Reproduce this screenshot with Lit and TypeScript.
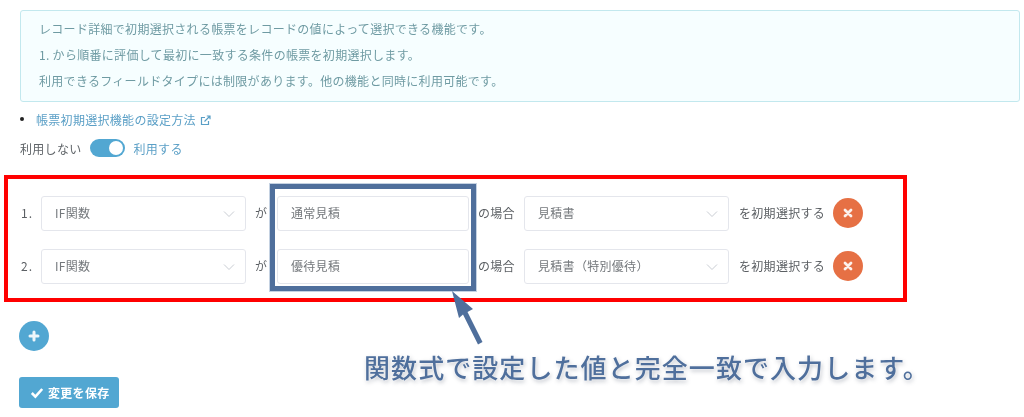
import { LitElement, html, css, svg } from "lit";
import { customElement } from "lit/decorators.js";

const chevron = html`<svg class="chev" width="12" height="8" viewBox="0 0 12 8"><path d="M1 1.500l5 5 5-5" fill="none" stroke="#c9cdd3" stroke-width="1"/></svg>`;
const cross = html`<svg width="12" height="12" viewBox="0 0 12 12"><path d="M3 3l6 6M9 3l-6 6" stroke="#fff" stroke-width="2.800" stroke-linecap="round" opacity=".9"/></svg>`;

@customElement("app-root")
export class AppRoot extends LitElement {
  static styles = css`
    :host {
      display: block;
      position: relative;
      width: 1024px;
      height: 417px;
      overflow: hidden;
      background: #fff;
      font-family: "Noto Sans CJK JP", "Noto Sans", sans-serif;
      font-size: 12px;
      letter-spacing: .3px;
      color: #5f6468;
    }
    .all { filter: blur(.3px); height: 417px; }
    .page { padding: 10px 4px 0 20px; display: flex; flex-direction: column; }
    .info {
      width: 1000px; height: 92px; box-sizing: border-box;
      padding: 5px 18px; background: #f6feff;
      border: 1px solid #c2e8ee; border-radius: 3px;
      color: #6f9ba3; line-height: 26px;
    }
    .link-row { display: flex; align-items: center; height: 18px; margin-top: 8px; color: #5a9fc6; }
    .dot { width: 4px; height: 4px; border-radius: 50%; background: #222; margin-right: 12px; }
    .link-row svg { margin-left: 4px; margin-top: 2px; }
    .toggle-row { display: flex; align-items: center; height: 20px; margin-top: 10px; }
    .toggle { width: 35px; height: 18px; border-radius: 9px; background: #52a7d2; margin: 0 9px 0 8px; display: flex; justify-content: flex-end; align-items: center; padding-right: 2px; box-sizing: border-box; }
    .knob { width: 14px; height: 14px; border-radius: 50%; background: #fff; }
    .on { color: #5a9fc6; }
    .rows { display: flex; flex-direction: column; gap: 18px; margin-top: 38px; }
    .row { display: flex; align-items: center; height: 35px; color: #5b5f63; }
    .label { padding-bottom: 3px; }
    .num { width: 20px; padding: 0 0 3px 1px; letter-spacing: 1.2px; }
    .field {
      height: 35px; box-sizing: border-box; border: 1px solid #e4e6ec; border-radius: 3px;
      background: #fff; display: flex; align-items: center; justify-content: space-between;
      padding: 0 10px 0 13px; color: #74787c;
    }
    .field span { padding-bottom: 3px; }
    .sel { width: 205px; }
    .inp { width: 192px; }
    .ga { width: 31px; padding-left: 9px; box-sizing: border-box; }
    .case { width: 55px; padding-left: 9px; box-sizing: border-box; }
    .tail { width: 94px; padding-left: 10px; box-sizing: content-box; white-space: nowrap; }
    .del { width: 30px; height: 30px; border-radius: 50%; background: #e67044; display: flex; align-items: center; justify-content: center; margin-bottom: 1px; }
    .add { width: 30px; height: 30px; border-radius: 50%; background: #52a7d2; display: flex; align-items: center; justify-content: center; margin: 37px 0 0 -1px; }
    .save { width: 100px; height: 31px; border-radius: 3px; background: #52a7d2; color: #fff; font-weight: 700; display: flex; align-items: center; justify-content: flex-start; gap: 4px; padding-left: 11px; box-sizing: border-box; margin: 26px 0 0 -1px; }
    .frame { position: absolute; box-sizing: border-box; }
    .red { left: 4px; top: 175px; width: 903px; height: 127px; border: 4px solid #ff0000; }
    .blue { left: 270px; top: 184px; width: 206px; height: 107px; border: 5px solid #4f6f9c; outline: 1px solid #c5d2e2; }
    .arrow { position: absolute; left: 440px; top: 285px; }
    .note {
      position: absolute; left: 364px; top: 348px; font-size: 26px; line-height: 38px; white-space: nowrap;
      color: #4f6f9c; font-weight: 500; letter-spacing: 1.07px;
      text-shadow: 0 0 2px #fff, 1px 2px 4px rgba(80,90,110,.4);
    }
  `;

  private row(n: string, a: string, b: string) {
    return html`<div class="row">
      <span class="num">${n}</span>
      <div class="field sel"><span>IF関数</span>${chevron}</div>
      <span class="ga label">が</span>
      <div class="field inp"><span>${a}</span></div>
      <span class="case label">の場合</span>
      <div class="field sel"><span>${b}</span>${chevron}</div>
      <span class="tail label">を初期選択する</span>
      <div class="del">${cross}</div>
    </div>`;
  }

  render() {
    return html`<div class="all"><div class="page">
      <div class="info">
        <div>レコード詳細で初期選択される帳票をレコードの値によって選択できる機能です。</div>
        <div>1. から順番に評価して最初に一致する条件の帳票を初期選択します。</div>
        <div>利用できるフィールドタイプには制限があります。他の機能と同時に利用可能です。</div>
      </div>
      <div class="link-row"><span class="dot"></span><span>帳票初期選択機能の設定方法</span>
        <svg width="11" height="11" viewBox="0 0 11 11" fill="none" stroke="#5a9fc6" stroke-width="1.200"><path d="M5 2.500H1.500v7h7V6"/><path d="M4.500 6.500L10 1M6.800 1H10v3.200"/></svg>
      </div>
      <div class="toggle-row"><span>利用しない</span><div class="toggle"><div class="knob"></div></div><span class="on">利用する</span></div>
      <div class="rows">
        ${this.row("1.", "通常見積", "見積書")}
        ${this.row("2.", "優待見積", "見積書（特別優待）")}
      </div>
      <div class="add"><svg width="14" height="14" viewBox="0 0 14 14"><path d="M7 3v8M3 7h8" stroke="#fff" stroke-width="3" stroke-linecap="round" opacity=".9"/></svg></div>
      <div class="save"><svg width="14" height="12" viewBox="0 0 14 12"><path d="M1.800 6l3.600 3.600L12.200 2" fill="none" stroke="#fff" stroke-width="2.600"/></svg><span>変更を保存</span></div>
    </div>
    <div class="frame red"></div>
    <div class="frame blue"></div>
    <svg class="arrow" width="50" height="64" viewBox="0 0 50 64">${svg`<path d="M12 6L33 24L27.500 27L42.500 57L38 59.500L23 29.500L19 33Z" fill="#4f6f9c"/>`}</svg>
    <div class="note">関数式で設定した値と完全一致で入力します。</div></div>`;
  }
}
